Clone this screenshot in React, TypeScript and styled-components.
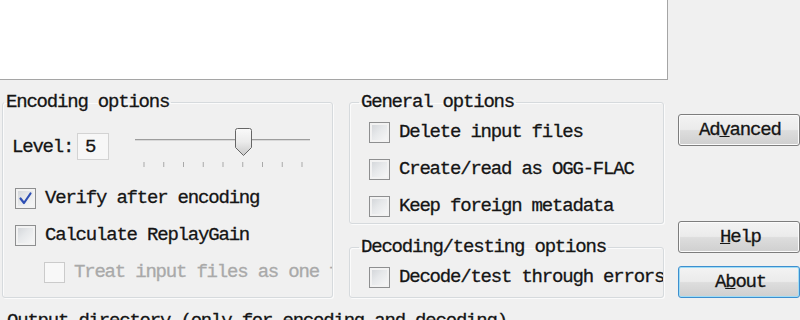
import styled, { createGlobalStyle } from "styled-components";

const GlobalStyle = createGlobalStyle`
  body {
    margin: 0;
    background: #f0f0f0;
  }
`;

const Window = styled.div`
  width: 800px;
  height: 320px;
  overflow: hidden;
  background: #f0f0f0;
  display: flex;
  flex-direction: column;
  font-family: "Liberation Mono", "DejaVu Sans Mono", monospace;
  font-size: 19px;
  letter-spacing: -1.2px;
  color: #151515;
  -webkit-text-stroke: 0.3px currentColor;
`;

const FileList = styled.div`
  flex: none;
  width: 667px;
  height: 79px;
  background: #fff;
  border-right: 1px solid #a5a5a5;
  border-bottom: 1px solid #a5a5a5;
`;

const Body = styled.div`
  flex: none;
  height: 218px;
  box-sizing: border-box;
  padding: 11px 0 0 2px;
  display: flex;
  align-items: stretch;
`;

const Group = styled.fieldset<{ $width: number }>`
  margin: 0;
  padding: 0;
  width: ${(p) => p.$width}px;
  box-sizing: border-box;
  min-width: 0;
  border: 1px solid #d6dadd;
  border-radius: 3px;
  box-shadow: inset 1px 1px 0 #fbfbfb, 1px 1px 0 #fbfbfb;
`;

const Caption = styled.legend<{ $offset: number }>`
  margin-left: ${(p) => p.$offset}px;
  padding: 0 2px;
  line-height: 22px;
  white-space: nowrap;
`;

const GroupContent = styled.div<{ $top: number; $bottom: number }>`
  display: flex;
  flex-direction: column;
  padding: ${(p) => p.$top}px 0 ${(p) => p.$bottom}px 0;
  overflow: hidden;
`;

const LevelRow = styled.div`
  height: 27px;
  display: flex;
  align-items: center;
  padding-left: 9px;
`;

const LevelLabel = styled.span`
  width: 65px;
`;

const LevelEdit = styled.div`
  width: 32px;
  height: 27px;
  box-sizing: border-box;
  border: 1px solid #d3d3d3;
  background: #f7f7f7;
  padding-left: 7px;
  display: flex;
  align-items: center;
`;

const SliderArt = styled.svg`
  align-self: flex-start;
  margin: -5px 0 0 23px;
  flex: none;
`;

const CheckList = styled.div<{ $top: number }>`
  display: flex;
  flex-direction: column;
  gap: 15px;
  margin-top: ${(p) => p.$top}px;
`;

const CheckRow = styled.label<{ $indent: number; $disabled?: boolean }>`
  height: 22px;
  display: flex;
  align-items: center;
  gap: 9px;
  padding-left: ${(p) => p.$indent}px;
  white-space: nowrap;
  color: ${(p) => (p.$disabled ? "#a9a9a9" : "inherit")};
`;

const Box = styled.span<{ $disabled?: boolean }>`
  flex: none;
  width: 21px;
  height: 21px;
  box-sizing: border-box;
  border: 1px solid ${(p) => (p.$disabled ? "#cbcbcb" : "#8e8f90")};
  background: ${(p) =>
    p.$disabled
      ? "#f8f8f8"
      : "linear-gradient(135deg, #cfd2d6 0%, #e6e8ea 45%, #f9f9f9 100%)"};
  box-shadow: inset 0 0 0 2px ${(p) => (p.$disabled ? "#f8f8f8" : "#f2f2f2")};
  display: flex;
  align-items: center;
  justify-content: center;
`;

const MiddleColumn = styled.div`
  display: flex;
  flex-direction: column;
  gap: 12px;
  margin-left: 16px;
`;

const ButtonColumn = styled.div`
  display: flex;
  flex-direction: column;
  margin-left: 14px;
  padding-top: 23px;
`;

const PushButton = styled.button<{ $isDefault?: boolean; $push?: boolean }>`
  width: 122px;
  height: 32px;
  box-sizing: border-box;
  margin-top: ${(p) => (p.$push ? "auto" : "0")};
  margin-bottom: ${(p) => (p.$push ? "13px" : "0")};
  padding: 0 0 0 2px;
  font: inherit;
  letter-spacing: inherit;
  color: #151515;
  text-align: left;
  text-indent: 18px;
  border: 1px solid ${(p) => (p.$isDefault ? "#3d8fcf" : "#7d7d7d")};
  border-radius: 3px;
  background: linear-gradient(#f3f3f3 0%, #ebebeb 48%, #dddddd 52%, #cfcfcf 100%);
  box-shadow: inset 0 0 0 1px ${(p) => (p.$isDefault ? "#9fdcf5" : "#fbfbfb")};
`;

const ButtonText = styled.span<{ $shift: number }>`
  display: inline-block;
  text-indent: 0;
  margin-left: ${(p) => p.$shift}px;
`;

const OutputLabel = styled.div`
  margin-top: 11px;
  padding-left: 7px;
  line-height: 24px;
  white-space: nowrap;
`;

const Check = () => (
  <svg width="15" height="15" viewBox="0 0 15 15">
    <path
      d="M2.5 7.5 L6 12 L12.5 2.5"
      fill="none"
      stroke="#2e4fb4"
      strokeWidth="2.2"
      strokeLinecap="round"
      strokeLinejoin="round"
    />
  </svg>
);

const CheckBox = ({
  label,
  indent,
  checked,
  disabled,
}: {
  label: string;
  indent: number;
  checked?: boolean;
  disabled?: boolean;
}) => (
  <CheckRow $indent={indent} $disabled={disabled}>
    <Box $disabled={disabled}>{checked && <Check />}</Box>
    {label}
  </CheckRow>
);

const ticks = Array.from({ length: 9 }, (_, i) => 12 + i * 19.75);

const Slider = () => (
  <SliderArt width="180" height="40" viewBox="0 0 180 40">
    <defs>
      <linearGradient id="thumbFill" x1="0" y1="0" x2="0" y2="1">
        <stop offset="0" stopColor="#fafafa" />
        <stop offset="0.5" stopColor="#ebebeb" />
        <stop offset="1" stopColor="#c9c9c9" />
      </linearGradient>
    </defs>
    <line x1="3" y1="11.5" x2="178" y2="11.5" stroke="#9d9d9d" />
    <line x1="3" y1="12.5" x2="178" y2="12.5" stroke="#d8d8d8" />
    {ticks.map((x) => (
      <line key={x} x1={x} y1="34" x2={x} y2="39" stroke="#a9a9a9" />
    ))}
    <path
      d="M105.5 0.5 H117.5 Q119.5 0.5 119.5 2.5 V19.5 L111.5 27.5 L103.5 19.5 V2.5 Q103.5 0.5 105.5 0.5 Z"
      fill="url(#thumbFill)"
      stroke="#666"
    />
  </SliderArt>
);

export default function App() {
  return (
    <>
      <GlobalStyle />
      <Window>
        <FileList />
        <Body>
          <Group $width={334}>
            <Caption $offset={1}>Encoding options</Caption>
            <GroupContent $top={20} $bottom={0}>
              <LevelRow>
                <LevelLabel>Level:</LevelLabel>
                <LevelEdit>5</LevelEdit>
                <Slider />
              </LevelRow>
              <CheckList $top={27}>
                <CheckBox label="Verify after encoding" indent={12} checked />
                <CheckBox label="Calculate ReplayGain" indent={12} />
                <CheckBox label="Treat input files as one file" indent={41} disabled />
              </CheckList>
            </GroupContent>
          </Group>
          <MiddleColumn>
            <Group $width={315}>
              <Caption $offset={9}>General options</Caption>
              <GroupContent $top={8} $bottom={6}>
                <CheckList $top={0}>
                  <CheckBox label="Delete input files" indent={19} />
                  <CheckBox label="Create/read as OGG-FLAC" indent={19} />
                  <CheckBox label="Keep foreign metadata" indent={19} />
                </CheckList>
              </GroupContent>
            </Group>
            <Group $width={315}>
              <Caption $offset={9}>Decoding/testing options</Caption>
              <GroupContent $top={8} $bottom={9}>
                <CheckList $top={0}>
                  <CheckBox label="Decode/test through errors" indent={19} />
                </CheckList>
              </GroupContent>
            </Group>
          </MiddleColumn>
          <ButtonColumn>
            <PushButton>
              <ButtonText $shift={0}>
                Ad<u>v</u>anced
              </ButtonText>
            </PushButton>
            <PushButton $push>
              <ButtonText $shift={21}>
                <u>H</u>elp
              </ButtonText>
            </PushButton>
            <PushButton $isDefault>
              <ButtonText $shift={16}>
                A<u>b</u>out
              </ButtonText>
            </PushButton>
          </ButtonColumn>
        </Body>
        <OutputLabel>Output directory (only for encoding and decoding)</OutputLabel>
      </Window>
    </>
  );
}
